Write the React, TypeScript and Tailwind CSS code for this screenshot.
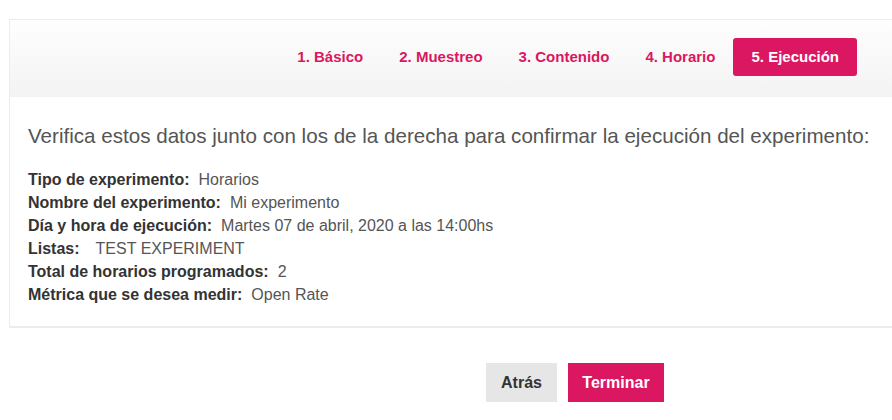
import React from 'react';

const steps = ['1. Básico', '2. Muestreo', '3. Contenido', '4. Horario', '5. Ejecución'];
const activeStep = 4;

const details: { label: string; value: string; gap?: string }[] = [
  { label: 'Tipo de experimento:', value: 'Horarios' },
  { label: 'Nombre del experimento:', value: 'Mi experimento' },
  { label: 'Día y hora de ejecución:', value: 'Martes 07 de abril, 2020 a las 14:00hs' },
  { label: 'Listas:', value: 'TEST EXPERIMENT', gap: 'ml-[16px]' },
  { label: 'Total de horarios programados:', value: '2' },
  { label: 'Métrica que se desea medir:', value: 'Open Rate' },
];

export default function App() {
  return (
    <div
      className="w-[892px] h-[420px] overflow-hidden bg-white"
      style={{ fontFamily: '"Liberation Sans", Arial, sans-serif' }}
    >
      <div className="pt-[19px] pl-[9px]">
        <div className="w-[900px] border-t border-l border-b-2 border-[#ececec] bg-white">
          <div className="h-[77px] flex items-start pt-[18px] justify-end pr-[52px] bg-gradient-to-b from-[#fefefe] to-[#f3f3f3]">
            {steps.map((step, i) => (
              <div
                key={step}
                className={`h-[38px] px-[18px] flex items-center rounded-[3px] text-[15px] font-bold ${
                  i === activeStep ? 'bg-[#da1760] text-white' : 'text-[#da1760]'
                }`}
              >
                {step}
              </div>
            ))}
          </div>
          <div className="pl-[18px] pt-[26px] pb-[20px]">
            <h2 className="text-[20.6px] leading-[26px] text-[#555]">
              Verifica estos datos junto con los de la derecha para confirmar la ejecución del experimento:
            </h2>
            <div className="mt-[19px] text-[16px] leading-[23px]">
              {details.map((d) => (
                <div key={d.label}>
                  <span className="font-bold text-[#333]">{d.label}</span>
                  <span className={`${d.gap ?? 'ml-[9px]'} text-[#555]`}>{d.value}</span>
                </div>
              ))}
            </div>
          </div>
        </div>
      </div>
      <div className="flex gap-[11px] pl-[486px] mt-[35px]">
        <button className="w-[71px] h-[39px] bg-[#e6e6e6] text-[#333] text-[16px] font-bold">Atrás</button>
        <button className="w-[96px] h-[39px] bg-[#da1760] text-white text-[16px] font-bold">Terminar</button>
      </div>
    </div>
  );
}
